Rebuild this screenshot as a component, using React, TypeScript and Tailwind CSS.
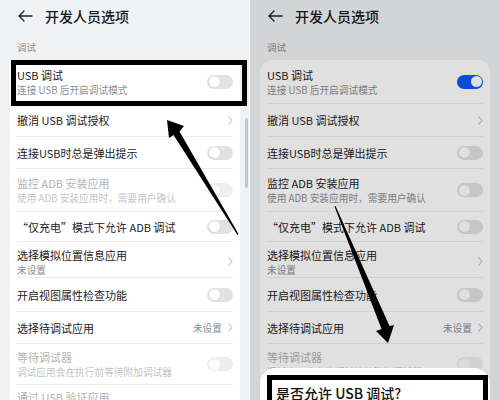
import React from 'react';

type Row = {
  t: string;
  s?: string;
  value?: string;
  type: 'toggle' | 'chevron' | 'none';
  h: string;
  disabled?: boolean | 'whenOff';
  key: string;
  top?: boolean;
};

const rows: Row[] = [
  { key: 'usb', t: 'USB 调试', s: '连接 USB 后开启调试模式', type: 'toggle', h: 'h-[44px] items-center' },
  { key: 'revoke', t: '撤消 USB 调试授权', type: 'chevron', h: 'h-[33px] items-center' },
  { key: 'popup', t: '连接USB时总是弹出提示', type: 'toggle', h: 'h-[32px] items-center' },
  { key: 'adb', t: '监控 ADB 安装应用', s: '使用 ADB 安装应用时，需要用户确认', type: 'toggle', disabled: 'whenOff', h: 'h-[43px] items-center' },
  { key: 'charge', t: '“仅充电”模式下允许 ADB 调试', type: 'toggle', h: 'h-[30px] items-center' },
  { key: 'mock', t: '选择模拟位置信息应用', s: '未设置', type: 'chevron', h: 'h-[36px] items-center pt-[4px]' },
  { key: 'view', t: '开启视图属性检查功能', type: 'toggle', h: 'h-[34px] items-center' },
  { key: 'debugapp', t: '选择待调试应用', value: '未设置', type: 'chevron', h: 'h-[32px] items-center' },
  { key: 'wait', t: '等待调试器', s: '调试应用会在执行前等待附加调试器', type: 'toggle', disabled: true, h: 'h-[41px] items-center' },
  { key: 'verify', t: '通过 USB 验证应用', type: 'none', disabled: true, h: 'h-[30px] items-start pt-[4px]', top: true },
];

function Toggle({ on, disabled }: { on?: boolean; disabled?: boolean }) {
  if (on) {
    return (
      <div className="w-[26px] h-[14px] rounded-full bg-[#0a59f7] flex items-center justify-end pr-[1.5px] shrink-0">
        <div className="w-[11px] h-[11px] rounded-full bg-white" />
      </div>
    );
  }
  return (
    <div
      className={
        disabled
          ? 'w-[26px] h-[14px] rounded-full bg-[#eeeef0] flex items-center pl-[1.5px] shrink-0'
          : 'w-[26px] h-[14px] rounded-full bg-[#e2e2e5] flex items-center pl-[1.5px] shrink-0'
      }
    >
      <div
        className={
          disabled
            ? 'w-[11px] h-[11px] rounded-full bg-[#fbfbfb]'
            : 'w-[11px] h-[11px] rounded-full bg-white shadow-[0_0_1px_rgba(0,0,0,0.15)]'
        }
      />
    </div>
  );
}

function Chevron() {
  return (
    <svg width="5" height="9" viewBox="0 0 5 9" className="shrink-0">
      <path d="M0.8 0.8 L4 4.5 L0.8 8.2" fill="none" stroke="#c2c2c4" strokeWidth="1.1" strokeLinecap="round" strokeLinejoin="round" />
    </svg>
  );
}

function Panel({ on }: { on: boolean }) {
  return (
    <div className="relative w-[250px] h-[400px] bg-[#f1f2f4] overflow-hidden flex flex-col">
      <div className="h-[32px] flex items-center pl-[18px] shrink-0">
        <svg width="15" height="12" viewBox="0 0 15 12" className="shrink-0">
          <path d="M14 6 H1.2 M6 1 L1 6 L6 11" fill="none" stroke="#222" strokeWidth="1.3" strokeLinecap="round" strokeLinejoin="round" />
        </svg>
        <span className="ml-[12px] text-[14px] leading-[20px] font-medium text-[#1a1a1a]">开发人员选项</span>
      </div>
      <div className="h-[28px] pt-[8px] pl-[17px] text-[9.5px] leading-[14px] text-[#8e8e92] shrink-0">调试</div>
      <div className="mx-[10px] bg-white rounded-t-[12px] flex-1 flex flex-col">
        {rows.map((r) => {
          const dis = r.disabled === 'whenOff' ? !on : !!r.disabled;
          return (
            <div
              key={r.key}
              className={`mx-[7px] flex justify-between shrink-0 ${r.h} ${r.key === 'verify' ? '' : 'border-b border-[#ececee]'}`}
            >
              <div className="flex flex-col min-w-0">
                <span className={`text-[11px] leading-[16px] whitespace-nowrap ${dis ? 'text-[#b2b2b4]' : 'text-[#1c1c1e]'}`}>{r.t}</span>
                {r.s && (
                  <span className={`text-[9.7px] leading-[14px] whitespace-nowrap ${dis ? 'text-[#c4c4c6]' : 'text-[#8e8e92]'}`}>{r.s}</span>
                )}
              </div>
              {r.type === 'toggle' && <Toggle on={on && r.key === 'usb'} disabled={dis} />}
              {r.type === 'chevron' && (
                <div className="flex items-center gap-[6px] shrink-0">
                  {r.value && <span className="text-[9.7px] leading-[14px] text-[#8e8e92]">{r.value}</span>}
                  <Chevron />
                </div>
              )}
            </div>
          );
        })}
      </div>
    </div>
  );
}

export default function App() {
  return (
    <div className="relative w-[500px] h-[400px] overflow-hidden flex font-['Noto_Sans_CJK_SC','Noto_Sans',sans-serif]">
      <div className="relative">
        <Panel on={false} />
        {/* scrollbar */}
        <div className="absolute left-[245px] top-[118px] w-[3px] h-[70px] rounded-full bg-[#c6c6c8]" />
        {/* annotation box */}
        <div className="absolute left-[11px] top-[60px] w-[236px] h-[46px] border-[5px] border-black" />
      </div>
      <div className="relative">
        <Panel on={true} />
        <div className="absolute inset-0 bg-black/[0.12]" />
        <div className="absolute left-[10px] right-[10px] top-[368px] h-[60px] bg-white rounded-[16px]">
          <div className="absolute left-[7px] right-[2px] top-[7px] h-[60px] border-[5px] border-black pl-[4px]">
            <span className="text-[14px] leading-[18px] font-medium text-[#111]">是否允许 USB 调试?</span>
          </div>
        </div>
      </div>
      <svg className="absolute inset-0 pointer-events-none" width="500" height="400" viewBox="0 0 500 400">
        <polygon
          points="167,120 184,126 179.5,131.5 238.5,234 237.5,235 173.5,135 169,138"
          fill="#000"
        />
        <polygon
          points="388,343 376,331 381.5,329 334.5,206.5 335.5,206 389.5,326 394,325"
          fill="#000"
        />
      </svg>
    </div>
  );
}
